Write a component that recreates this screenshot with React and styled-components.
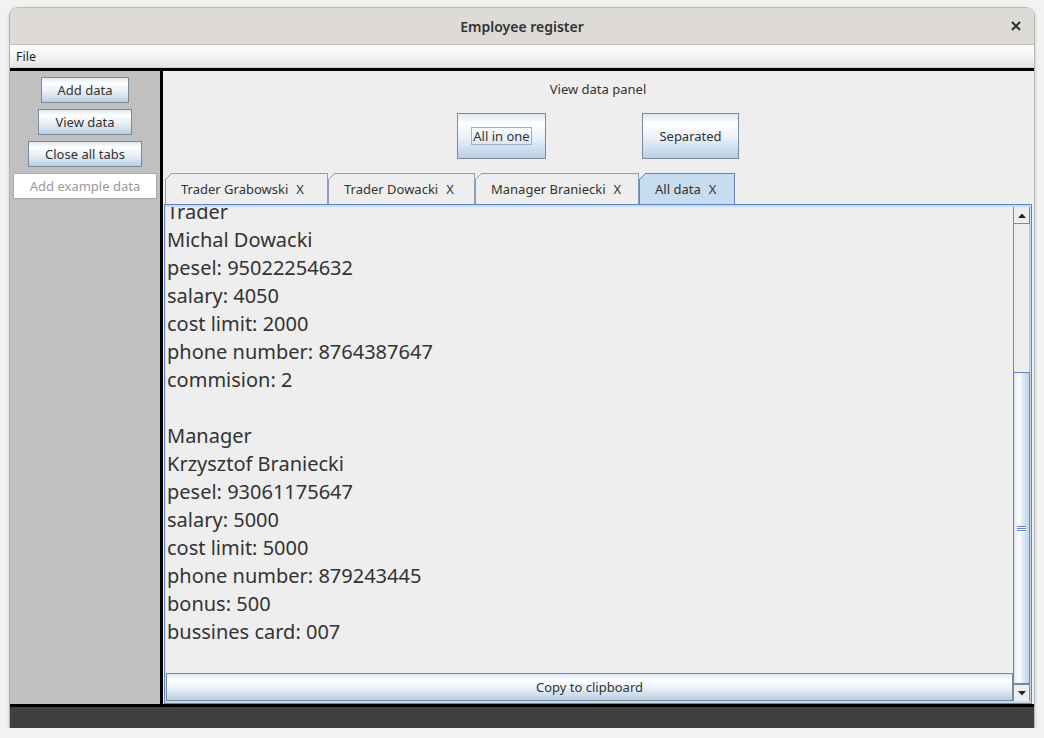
import React from 'react';
import styled, { createGlobalStyle } from 'styled-components';

const Global = createGlobalStyle`
  html, body {
    margin: 0;
    padding: 0;
    background: #f2f2f2;
    font-family: "Noto Sans", "DejaVu Sans", sans-serif;
  }
`;

const Window = styled.div`
  margin: 8px 0 0 10px;
  width: 1024px;
  height: 720px;
  display: flex;
  flex-direction: column;
  border-radius: 8px 8px 0 0;
  overflow: hidden;
  box-shadow: 0 1px 4px rgba(0, 0, 0, 0.25), 0 0 0 1px #c9c9c9;
  background: #eeeeee;
`;

const TitleBar = styled.div`
  height: 36px;
  flex: none;
  background: #dedad6;
  border-bottom: 1px solid #c4c0bc;
  display: flex;
  align-items: center;
  justify-content: center;
  position: relative;
  color: #2e3436;
  font-size: 14px;
  font-weight: 600;
`;

const CloseX = styled.div`
  position: absolute;
  right: 13px;
  top: 13px;
  width: 10px;
  height: 10px;
  display: flex;
`;

const MenuBar = styled.div`
  height: 23px;
  flex: none;
  box-sizing: border-box;
  background: linear-gradient(#ffffff, #f4f4f4 50%, #e4e4e4);
  border-bottom: 1px solid #cfcfcf;
  display: flex;
  align-items: center;
  padding-left: 6px;
  font-size: 12.5px;
  color: #222;
`;

const Main = styled.div`
  flex: none;
  height: 633px;
  border-top: 3px solid #000;
  display: flex;
`;

const LeftPanel = styled.div`
  width: 150px;
  flex: none;
  background: #c0c0c0;
  display: flex;
  flex-direction: column;
  align-items: center;
  gap: 6px;
  padding-top: 6px;
  box-sizing: border-box;
`;

const Button = styled.div`
  box-sizing: border-box;
  height: ${p => p.$tall ? 46 : 26}px;
  width: ${p => p.$w ? `${p.$w}px` : 'auto'};
  padding: 0 16px;
  border: 1px solid #7a8a99;
  background: linear-gradient(#dde8f3, #ffffff 22%, #e9f0f7 55%, #b8cfe5);
  display: flex;
  align-items: center;
  justify-content: center;
  font-size: 13px;
  color: #333;
  white-space: nowrap;
`;

const Focus = styled.span`
  border: 1px solid #99b0cc;
  padding: 0 1px;
  line-height: 16px;
`;

const TextField = styled.div`
  box-sizing: border-box;
  width: 144px;
  height: 26px;
  background: #fff;
  border: 1px solid #a8a8a8;
  display: flex;
  align-items: center;
  justify-content: center;
  font-size: 13px;
  color: #9a9a9a;
`;

const RightPanel = styled.div`
  flex: 1;
  border-left: 3px solid #000;
  background: #eeeeee;
  display: flex;
  flex-direction: column;
  padding: 0 2px 0 1px;
`;

const PanelTitle = styled.div`
  margin-top: 9px;
  height: 18px;
  line-height: 18px;
  text-align: center;
  font-size: 13px;
  color: #333;
`;

const ModeRow = styled.div`
  margin-top: 15px;
  margin-bottom: 14px;
  display: flex;
  justify-content: center;
  gap: 96px;
`;

const TabRow = styled.div`
  display: flex;
  height: 31px;
  padding-left: 1px;
`;

const Tab = styled.div`
  position: relative;
  box-sizing: border-box;
  flex: none;
  width: ${p => p.$w}px;
  height: 31px;
  padding-left: 15px;
  border: 1px solid ${p => p.$active ? '#6382bf' : '#8c9fb9'};
  border-bottom: none;
  background: ${p => p.$active ? '#c8dcf0' : '#eeeeee'};
  display: flex;
  align-items: center;
  gap: 8px;
  font-size: 13px;
  color: #333;
  white-space: nowrap;
  &::before {
    content: '';
    position: absolute;
    top: -1px;
    left: -1px;
    width: 7px;
    height: 7px;
    background: linear-gradient(
      135deg,
      #eeeeee 0 44%,
      ${p => p.$active ? '#6382bf' : '#8c9fb9'} 44% 56%,
      transparent 56%
    );
  }
`;

const TabBody = styled.div`
  flex: 1;
  min-height: 0;
  border: 1px solid #6382bf;
  background: #c8dcf0;
  padding: 2px 1px 2px 1px;
  display: flex;
`;

const Viewport = styled.div`
  flex: 1;
  display: flex;
  flex-direction: column;
  min-width: 0;
`;

const TextArea = styled.div`
  flex: 1;
  overflow: hidden;
  background: #eeeeee;
  padding-left: 1px;
  font-size: 20px;
  line-height: 28px;
  color: #333;
`;

const Lines = styled.div`
  margin-top: -9px;
`;

const Line = styled.div`
  height: 28px;
  white-space: pre;
`;

const CopyButton = styled(Button)`
  height: 28px;
  flex: none;
`;

const ScrollBar = styled.div`
  width: 17px;
  flex: none;
  display: flex;
  flex-direction: column;
  background: #eeeeee;
`;

const Arrow = styled.div`
  height: 17px;
  flex: none;
  box-sizing: border-box;
  border: 1px solid #7a8a99;
  border-width: ${p => p.$down ? '1px 1px 0 1px' : '0 1px 1px 1px'};
  background: #eeeeee;
  display: flex;
  align-items: center;
  justify-content: center;
`;

const Track = styled.div`
  flex: ${p => p.$grow};
  border-left: 1px solid #7a8a99;
  border-right: 1px solid #b8c4d0;
`;

const Thumb = styled.div`
  flex: ${p => p.$grow};
  box-sizing: border-box;
  border: 1px solid #6382bf;
  border-right-color: #7a8a99;
  background: linear-gradient(to right, #dde8f3, #ffffff 35%, #dde8f3 60%, #c0d4ea);
  display: flex;
  align-items: center;
  justify-content: center;
`;

const Grip = styled.div`
  width: 9px;
  display: flex;
  flex-direction: column;
  gap: 1px;
  span {
    height: 1px;
    background: #6382bf;
    box-shadow: 0 1px 0 #fff;
  }
`;

const Footer = styled.div`
  flex: 1;
  border-top: 3px solid #000;
  background: #404040;
`;

const data = [
  'Trader',
  'Michal Dowacki',
  'pesel: 95022254632',
  'salary: 4050',
  'cost limit: 2000',
  'phone number: 8764387647',
  'commision: 2',
  '',
  'Manager',
  'Krzysztof Braniecki',
  'pesel: 93061175647',
  'salary: 5000',
  'cost limit: 5000',
  'phone number: 879243445',
  'bonus: 500',
  'bussines card: 007',
];

const tabs = [
  { name: 'Trader Grabowski', w: 163 },
  { name: 'Trader Dowacki', w: 147 },
  { name: 'Manager Braniecki', w: 164 },
  { name: 'All data', w: 96, active: true },
];

const Tri = ({ down }) => (
  <svg width="8" height="5" viewBox="0 0 8 5">
    <path d={down ? 'M0 0 H8 L4 4.5 Z' : 'M0 5 H8 L4 0.5 Z'} fill="#222" />
  </svg>
);

const App = () => (
  <>
    <Global />
    <Window>
      <TitleBar>
        Employee register
        <CloseX>
          <svg width="10" height="10" viewBox="0 0 10 10">
            <path d="M1 1 L9 9 M9 1 L1 9" stroke="#2e3436" strokeWidth="2" />
          </svg>
        </CloseX>
      </TitleBar>
      <MenuBar>File</MenuBar>
      <Main>
        <LeftPanel>
          <Button>Add data</Button>
          <Button>View data</Button>
          <Button>Close all tabs</Button>
          <TextField>Add example data</TextField>
        </LeftPanel>
        <RightPanel>
          <PanelTitle>View data panel</PanelTitle>
          <ModeRow>
            <Button $tall $w={89}><Focus>All in one</Focus></Button>
            <Button $tall $w={97}>Separated</Button>
          </ModeRow>
          <TabRow>
            {tabs.map(t => (
              <Tab key={t.name} $active={t.active} $w={t.w}>
                <span>{t.name}</span>
                <span>X</span>
              </Tab>
            ))}
          </TabRow>
          <TabBody>
            <Viewport>
              <TextArea>
                <Lines>
                  {data.map((l, i) => <Line key={i}>{l}</Line>)}
                </Lines>
              </TextArea>
              <CopyButton>Copy to clipboard</CopyButton>
            </Viewport>
            <ScrollBar>
              <Arrow><Tri /></Arrow>
              <Track $grow={149} />
              <Thumb $grow={311}>
                <Grip><span /><span /><span /></Grip>
              </Thumb>
              <Arrow $down><Tri down /></Arrow>
            </ScrollBar>
          </TabBody>
        </RightPanel>
      </Main>
      <Footer />
    </Window>
  </>
);

export default App;
